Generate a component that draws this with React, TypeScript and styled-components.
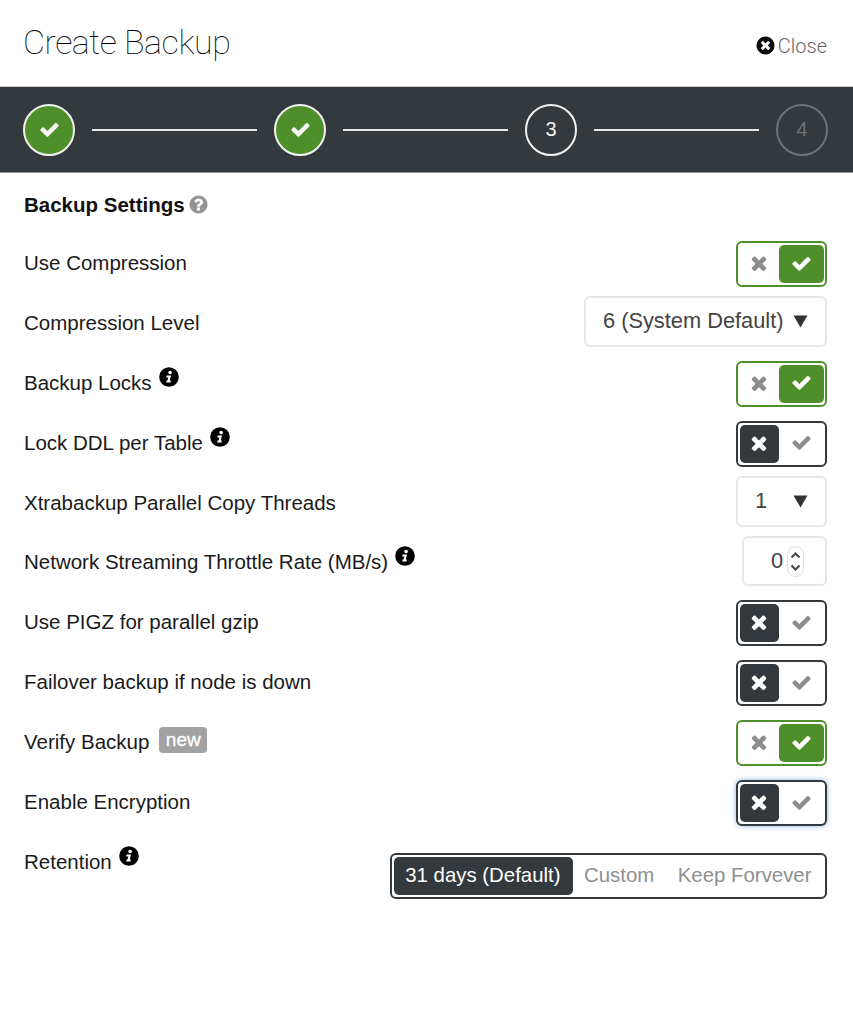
import * as React from "react";
import styled, { createGlobalStyle } from "styled-components";

const dark = "#33393d";
const green = "#4e8f2a";

const GlobalStyle = createGlobalStyle`
    html, body {
        margin: 0;
        background: #fff;
    }
    body {
        font-family: "Liberation Sans", Arial, sans-serif;
        color: #1a1a1a;
    }
`;

const Page = styled.div`
    width: 853px;
    height: 1024px;
    overflow: hidden;
`;

const Header = styled.header`
    height: 87px;
    box-sizing: border-box;
    padding: 0 26px 0 23px;
    display: flex;
    align-items: center;
    justify-content: space-between;
    border-bottom: 1px solid #c9cbcc;
`;

const Title = styled.h1`
    margin: 0 0 3px;
    font-family: Roboto, sans-serif;
    font-size: 34px;
    font-weight: 100;
    letter-spacing: -0.45px;
    color: #000;
`;

const CloseLink = styled.a`
    display: flex;
    align-items: center;
    gap: 2px;
    margin-top: 5px;
    font-family: Roboto, sans-serif;
    font-size: 20px;
    font-weight: 300;
    color: #666;
`;

const Stepper = styled.div`
    height: 86px;
    box-sizing: border-box;
    padding: 0 25px 0 23px;
    display: flex;
    align-items: center;
    background: ${dark};
    border-bottom: 1px solid #8a8e91;
`;

const Step = styled.div<{ $state: "done" | "current" | "todo" }>`
    flex: none;
    width: 52px;
    height: 52px;
    box-sizing: border-box;
    border-radius: 50%;
    display: flex;
    align-items: center;
    justify-content: center;
    font-size: 20px;
    border: 2px solid ${(p) => (p.$state === "todo" ? "#6d7276" : "#f2f2f2")};
    color: ${(p) => (p.$state === "todo" ? "#6d7276" : "#f4f4f4")};
    background: ${(p) => (p.$state === "done" ? green : "transparent")};
`;

const StepLine = styled.div`
    flex: 1;
    height: 2px;
    margin: 0 17px;
    background: #e6e7e7;
`;

const Body = styled.main`
    padding: 0 26px 0 24px;
`;

const SectionTitle = styled.h2`
    margin: 0;
    height: 63px;
    display: flex;
    align-items: center;
    gap: 3px;
    box-sizing: border-box;
    font-size: 20.5px;
    font-weight: 700;
    color: #111;
`;

const Row = styled.div`
    height: 59.9px;
    display: flex;
    align-items: flex-start;
    justify-content: space-between;
`;

const Label = styled.div`
    margin-top: 13px;
    display: flex;
    align-items: flex-start;
    gap: 7px;
    font-size: 20.5px;
    line-height: 28px;
    white-space: nowrap;
`;

const HintIcon = styled.svg`
    flex: none;
    margin-top: -2px;
`;

const Badge = styled.span`
    margin: -1px 0 0 3px;
    height: 26px;
    padding: 0 6.5px;
    border-radius: 4px;
    background: #a2a2a2;
    color: #fff;
    font-size: 19px;
    line-height: 25px;
    -webkit-text-stroke: 0.3px #fff;
`;

const Toggle = styled.div<{ $on: boolean; $focus?: boolean }>`
    margin-top: 5px;
    width: 91px;
    height: 46px;
    box-sizing: border-box;
    padding: 2px 1.5px;
    display: flex;
    border-radius: 6px;
    background: #fff;
    border: 2px solid ${(p) => (p.$on ? green : dark)};
    box-shadow: ${(p) => (p.$focus ? "0 0 5px rgba(80, 140, 210, 0.7)" : "none")};
`;

const ToggleSide = styled.div<{ $active: string | null; $wide?: boolean }>`
    width: ${(p) => (p.$wide ? "45px" : "40px")};
    padding-bottom: 2px;
    display: flex;
    align-items: center;
    justify-content: center;
    border-radius: 5px;
    background: ${(p) => p.$active ?? "transparent"};
    color: ${(p) => (p.$active ? "#fff" : "#8c8c8c")};
`;

const SelectBox = styled.div<{ $width: number }>`
    width: ${(p) => p.$width}px;
    height: 51px;
    box-sizing: border-box;
    display: flex;
    align-items: center;
    justify-content: space-between;
    padding: 0 17px 1px 17px;
    border: 2px solid #e6e7e7;
    border-radius: 6px;
    font-size: 21.8px;
    color: #444;
    svg {
        flex: none;
        margin-top: 1px;
    }
`;

const NumberBox = styled.div`
    width: 85px;
    height: 50px;
    margin-top: 1px;
    box-sizing: border-box;
    display: flex;
    align-items: center;
    justify-content: flex-end;
    gap: 4px;
    padding-right: 21px;
    border: 2px solid #e6e7e7;
    border-radius: 6px;
    font-size: 21.8px;
    color: #444;
`;

const Spinner = styled.div`
    width: 17px;
    height: 31px;
    box-sizing: border-box;
    border: 1px solid #dedede;
    border-radius: 9px;
    display: flex;
    align-items: center;
    justify-content: center;
`;

const Segmented = styled.div`
    margin-top: 18px;
    height: 46px;
    box-sizing: border-box;
    padding: 2px 1.5px;
    display: flex;
    border: 2px solid ${dark};
    border-radius: 6px;
`;

const Segment = styled.div<{ $active?: boolean }>`
    display: flex;
    align-items: center;
    padding: 0 12px 0 11.5px;
    border-radius: 5px;
    font-size: 20.4px;
    white-space: nowrap;
    background: ${(p) => (p.$active ? dark : "transparent")};
    color: ${(p) => (p.$active ? "#fff" : "#8f8f8f")};
`;

// font-awesome 4 glyphs, the ones in react-icons are too thin here
const CheckIcon = () => (
    <svg width="21" height="21" viewBox="0 0 1792 1792" fill="currentColor">
        <path d="M1671 566q0 40-28 68l-724 724-136 136q-28 28-68 28t-68-28l-136-136-362-362q-28-28-28-68t28-68l136-136q28-28 68-28t68 28l294 295 656-657q28-28 68-28t68 28l136 136q28 28 28 68z" />
    </svg>
);

const TimesIcon = () => (
    <svg width="22" height="22" viewBox="0 0 1408 1792" fill="currentColor">
        <path d="M1298 1322q0 40-28 68l-136 136q-28 28-68 28t-68-28l-294-294-294 294q-28 28-68 28t-68-28l-136-136q-28-28-28-68t28-68l294-294-294-294q-28-28-28-68t28-68l136-136q28-28 68-28t68 28l294 294 294-294q28-28 68-28t68 28l136 136q28 28 28 68t-28 68l-294 294 294 294q28 28 28 68z" />
    </svg>
);

const CloseIcon = () => (
    <svg width="21" height="21" viewBox="0 0 1792 1792" fill="#0c0c0c">
        <path d="M1277 1122q0-26-19-45l-181-181 181-181q19-19 19-45 0-27-19-46l-90-90q-19-19-46-19-26 0-45 19l-181 181-181-181q-19-19-45-19-27 0-46 19l-90 90q-19 19-19 46 0 26 19 45l181 181-181 181q-19 19-19 45 0 27 19 46l90 90q19 19 46 19 26 0 45-19l181-181 181 181q19 19 45 19 27 0 46-19l90-90q19-19 19-46zm387-226q0 209-103 385.5t-279.5 279.5-385.5 103-385.5-103-279.5-279.5-103-385.5 103-385.5 279.5-279.5 385.5-103 385.5 103 279.5 279.5 103 385.5z" />
    </svg>
);

const QuestionIcon = () => (
    <svg width="21" height="21" viewBox="0 0 1792 1792" fill="#949494">
        <path d="M1024 1376v-192q0-14-9-23t-23-9h-192q-14 0-23 9t-9 23v192q0 14 9 23t23 9h192q14 0 23-9t9-23zm256-672q0-88-55.5-163t-138.5-116-170-41q-243 0-371 213-15 24 8 42l132 100q7 6 19 6 16 0 25-12 53-68 86-92 34-24 86-24 48 0 85.5 26t37.5 59q0 38-20 61t-68 45q-63 28-115.5 86.5t-52.5 125.5v36q0 14 9 23t23 9h192q14 0 23-9t9-23q0-19 21.5-49.5t54.5-49.5q32-18 49-28.5t46-35 44.5-48 28-60.5 12.5-81zm384 192q0 209-103 385.5t-279.5 279.5-385.5 103-385.5-103-279.5-279.5-103-385.5 103-385.5 279.5-279.5 385.5-103 385.5 103 279.5 279.5 103 385.5z" />
    </svg>
);

// the i in the reference leans a little, so it is drawn by hand
const Hint = () => (
    <HintIcon width="20" height="20" viewBox="0 0 20 20">
        <circle cx="10" cy="10" r="9.8" fill="#000" />
        <circle cx="11.1" cy="5.6" r="1.8" fill="#fff" />
        <path d="M7.6 8.6h4.4l-1.3 5h1.2l-.4 1.8H7.2l.4-1.8h.9l.9-3.2H7.2z" fill="#fff" />
    </HintIcon>
);

const Arrow = () => (
    <svg width="15" height="13" viewBox="0 0 15 13">
        <path d="M0.5 0.5H14.5L7.5 12.5Z" fill="#333" />
    </svg>
);

const SpinIcon = () => (
    <svg width="13" height="25" viewBox="0 0 13 25" fill="none" stroke="#444" strokeWidth="2">
        <path d="M2.5 8.5L6.5 4.5L10.5 8.5" />
        <path d="M2.5 16.5L6.5 20.5L10.5 16.5" />
    </svg>
);

const Switch: React.FC<{ on?: boolean; focus?: boolean }> = ({ on = false, focus }) => (
    <Toggle $on={on} $focus={focus}>
        <ToggleSide $active={on ? null : dark}>
            <TimesIcon />
        </ToggleSide>
        <ToggleSide $wide $active={on ? green : null}>
            <CheckIcon />
        </ToggleSide>
    </Toggle>
);

export default function App() {
    return (
        <Page>
            <GlobalStyle />
            <Header>
                <Title>Create Backup</Title>
                <CloseLink>
                    <CloseIcon />
                    Close
                </CloseLink>
            </Header>
            <Stepper>
                <Step $state="done">
                    <CheckIcon />
                </Step>
                <StepLine />
                <Step $state="done">
                    <CheckIcon />
                </Step>
                <StepLine />
                <Step $state="current">3</Step>
                <StepLine />
                <Step $state="todo">4</Step>
            </Stepper>
            <Body>
                <SectionTitle>
                    Backup Settings
                    <QuestionIcon />
                </SectionTitle>
                <Row>
                    <Label>Use Compression</Label>
                    <Switch on />
                </Row>
                <Row>
                    <Label>Compression Level</Label>
                    <SelectBox $width={243}>
                        6 (System Default)
                        <Arrow />
                    </SelectBox>
                </Row>
                <Row>
                    <Label>
                        Backup Locks
                        <Hint />
                    </Label>
                    <Switch on />
                </Row>
                <Row>
                    <Label>
                        Lock DDL per Table
                        <Hint />
                    </Label>
                    <Switch />
                </Row>
                <Row>
                    <Label>Xtrabackup Parallel Copy Threads</Label>
                    <SelectBox $width={91}>
                        1
                        <Arrow />
                    </SelectBox>
                </Row>
                <Row>
                    <Label>
                        Network Streaming Throttle Rate (MB/s)
                        <Hint />
                    </Label>
                    <NumberBox>
                        0
                        <Spinner>
                            <SpinIcon />
                        </Spinner>
                    </NumberBox>
                </Row>
                <Row>
                    <Label>Use PIGZ for parallel gzip</Label>
                    <Switch />
                </Row>
                <Row>
                    <Label>Failover backup if node is down</Label>
                    <Switch />
                </Row>
                <Row>
                    <Label>
                        Verify Backup
                        <Badge>new</Badge>
                    </Label>
                    <Switch on />
                </Row>
                <Row>
                    <Label>Enable Encryption</Label>
                    <Switch focus />
                </Row>
                <Row>
                    <Label>
                        Retention
                        <Hint />
                    </Label>
                    <Segmented>
                        <Segment $active>31 days (Default)</Segment>
                        <Segment>Custom</Segment>
                        <Segment>Keep Forvever</Segment>
                    </Segmented>
                </Row>
            </Body>
        </Page>
    );
}
